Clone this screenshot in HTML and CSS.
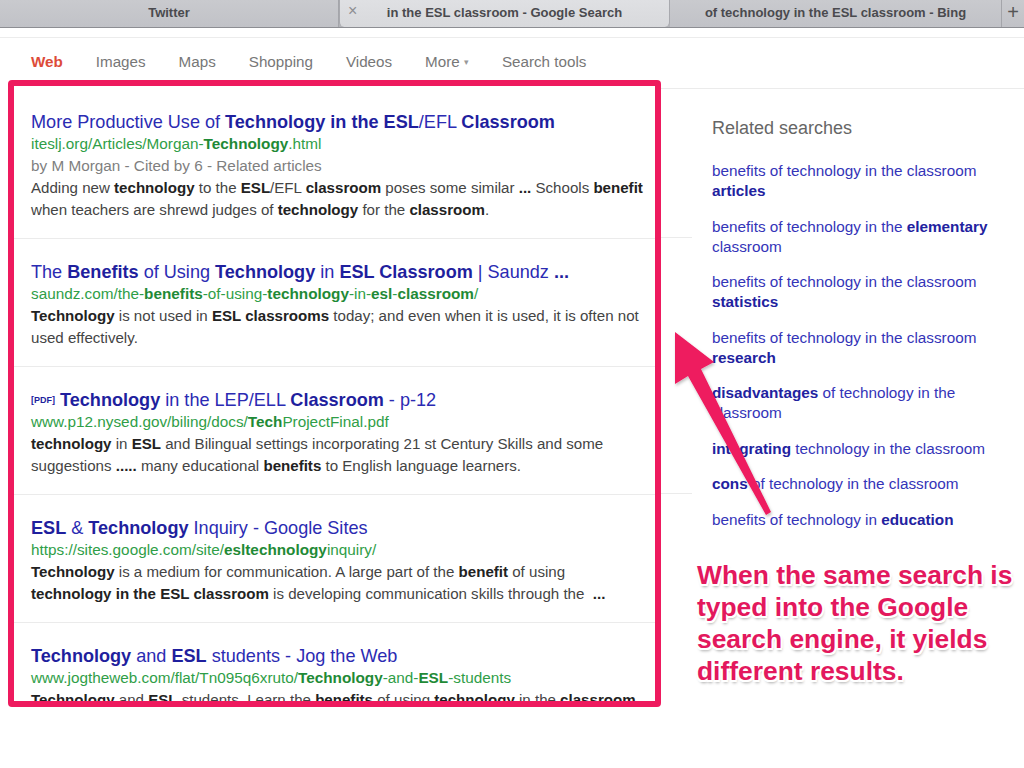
FILE: index.html
```html
<!DOCTYPE html>
<html>
<head>
<meta charset="utf-8">
<link rel="stylesheet" href="styles.css">
</head>
<body>
<div class="tabbar">
  <div class="tab tab-first">Twitter</div>
  <div class="tab tab-active"><span class="tab-close">×</span><span class="tab-title">in the ESL classroom - Google Search</span></div>
  <div class="tab tab-last">of technology in the ESL classroom - Bing</div>
  <div class="tab-plus">+</div>
</div>
<div class="toolstrip"></div>
<nav class="gnav">
  <span class="gnav-item gnav-active">Web</span>
  <span class="gnav-item">Images</span>
  <span class="gnav-item">Maps</span>
  <span class="gnav-item">Shopping</span>
  <span class="gnav-item">Videos</span>
  <span class="gnav-item">More <span class="caret">▾</span></span>
  <span class="gnav-item">Search tools</span>
</nav>
<main class="main">
  <section class="results">
    <div class="result">
      <div class="r-title">More Productive Use of <b>Technology in the ESL</b>/EFL <b>Classroom</b></div>
      <div class="r-url">iteslj.org/Articles/Morgan-<b>Technology</b>.html</div>
      <div class="r-meta">by M Morgan - Cited by 6 - Related articles</div>
      <p class="r-snip">Adding new <b>technology</b> to the <b>ESL</b>/EFL <b>classroom</b> poses some similar <b>...</b> Schools <b>benefit</b> when teachers are shrewd judges of <b>technology</b> for the <b>classroom</b>.</p>
    </div>
    <div class="result">
      <div class="r-title">The <b>Benefits</b> of Using <b>Technology</b> in <b>ESL Classroom</b> | Saundz <b>...</b></div>
      <div class="r-url">saundz.com/the-<b>benefits</b>-of-using-<b>technology</b>-in-<b>esl</b>-<b>classroom</b>/</div>
      <p class="r-snip"><b>Technology</b> is not used in <b>ESL classrooms</b> today; and even when it is used, it is often not used effectively.</p>
    </div>
    <div class="result">
      <div class="r-title"><span class="pdf">[PDF]</span> <b>Technology</b> in the LEP/ELL <b>Classroom</b> - p-12</div>
      <div class="r-url">www.p12.nysed.gov/biling/docs/<b>Tech</b>ProjectFinal.pdf</div>
      <p class="r-snip"><b>technology</b> in <b>ESL</b> and Bilingual settings incorporating 21 st Century Skills and some suggestions <b>.....</b> many educational <b>benefits</b> to English language learners.</p>
    </div>
    <div class="result">
      <div class="r-title"><b>ESL</b> &amp; <b>Technology</b> Inquiry - Google Sites</div>
      <div class="r-url">https://sites.google.com/site/<b>esltechnology</b>inquiry/</div>
      <p class="r-snip"><b>Technology</b> is a medium for communication. A large part of the <b>benefit</b> of using <b>technology in the ESL classroom</b> is developing communication skills through the &nbsp;<b>...</b></p>
    </div>
    <div class="result">
      <div class="r-title"><b>Technology</b> and <b>ESL</b> students - Jog the Web</div>
      <div class="r-url">www.jogtheweb.com/flat/Tn095q6xruto/<b>Technology</b>-and-<b>ESL</b>-students</div>
      <p class="r-snip"><b>Technology</b> and <b>ESL</b> students. Learn the <b>benefits</b> of using <b>technology</b> in the <b>classroom</b></p>
    </div>
  </section>
  <aside class="side">
    <h2 class="side-head">Related searches</h2>
    <ul class="related">
      <li>benefits of technology in the classroom <b>articles</b></li>
      <li>benefits of technology in the <b>elementary</b> classroom</li>
      <li>benefits of technology in the classroom <b>statistics</b></li>
      <li>benefits of technology in the classroom <b>research</b></li>
      <li><b>disadvantages</b> of technology in the classroom</li>
      <li><b>integrating</b> technology in the classroom</li>
      <li><b>cons</b> of technology in the classroom</li>
      <li>benefits of technology in <b>education</b></li>
    </ul>
  </aside>
</main>
<svg class="arrow" width="1024" height="768" viewBox="0 0 1024 768">
  <defs>
    <filter id="sh" x="-20%" y="-20%" width="140%" height="140%">
      <feDropShadow dx="1" dy="2" stdDeviation="1.5" flood-color="#000" flood-opacity="0.25"/>
    </filter>
  </defs>
  <polygon filter="url(#sh)" fill="#ee1a5e" points="675,332 714,362 701,369 771,512 766,515 688,376 675,384"/>
</svg>
<div class="callout">When the same search is typed into the Google search engine, it yields different results.</div>
</body>
</html>
```
FILE: styles.css
```css
* { box-sizing: border-box; }
html, body { margin: 0; padding: 0; background: #fff; }
body {
  font-family: "Liberation Sans", Arial, sans-serif;
  width: 1024px;
  height: 768px;
  overflow: hidden;
  position: relative;
}

/* tab bar */
.tabbar {
  display: flex;
  height: 28px;
  background: #b3b4b9;
  border-bottom: 1px solid #8d8e93;
}
.tab {
  display: flex;
  align-items: center;
  justify-content: center;
  padding-bottom: 3px;
  font-size: 13px;
  font-weight: bold;
  color: #4a4a4e;
  background: linear-gradient(#c9cace, #c1c2c7);
  border-right: 1px solid #a4a5aa;
}
.tab-first { width: 339px; }
.tab-active {
  width: 331px;
  position: relative;
  background: linear-gradient(#dfe0e3, #d8d9dc);
  border-radius: 0 0 5px 5px;
  border-left: 1px solid #a8a9ae;
  border-right: 1px solid #a8a9ae;
}
.tab-close {
  position: absolute;
  left: 8px;
  top: 2px;
  font-size: 16px;
  font-weight: normal;
  color: #8e8e92;
}
.tab-last { width: 332px; }
.tab-plus {
  flex: 1;
  display: flex;
  align-items: center;
  justify-content: center;
  padding-bottom: 3px;
  font-size: 20px;
  color: #555;
  background: linear-gradient(#c9cace, #c1c2c7);
}

.toolstrip {
  height: 10px;
  border-bottom: 1px solid #ececec;
}

/* google nav */
.gnav {
  display: flex;
  gap: 33px;
  padding: 14px 0 8px 31px;
  height: 42px;
  font-size: 15.2px;
  line-height: 20px;
  color: #777;
}
.gnav-active { color: #dd4b39; font-weight: bold; }
.caret { font-size: 9px; vertical-align: 2px; color: #999; }

/* main */
.main {
  display: flex;
  align-items: flex-start;
}
.results {
  margin-left: 8px;
  width: 653px;
  height: 627px;
  border: 6px solid #ee1a5e;
  border-radius: 4px;
  overflow: hidden;
  padding: 3px 0 0 0;
  background: #fff;
}
.result {
  padding: 23px 8px 17px 17px;
  border-bottom: 1px solid #ebebeb;
}
.r-title {
  font-size: 18.1px;
  line-height: 21px;
  color: #2b2bb3;
  white-space: nowrap;
}
.r-title b { color: #1f1f9e; }
.pdf { font-size: 9px; font-weight: bold; vertical-align: 3px; color: #1f1f9e; }
.r-url {
  font-size: 15.3px;
  line-height: 22px;
  color: #2f9e47;
  white-space: nowrap;
}
.r-url b { color: #1f8a36; }
.r-meta {
  font-size: 15.3px;
  line-height: 22px;
  color: #7f7f7f;
}
.r-snip {
  margin: 0;
  font-size: 15.1px;
  line-height: 22px;
  color: #444;
}
.r-snip b { color: #222; }

/* side column */
.side {
  flex: 1;
  margin-top: 8px;
  border-top: 1px solid #ebebeb;
  padding: 28px 20px 0 51px;
  background:
    linear-gradient(#ebebeb, #ebebeb) 0 148px / 31px 1px no-repeat,
    linear-gradient(#ebebeb, #ebebeb) 0 404px / 31px 1px no-repeat;
  height: 500px;
}
.side-head {
  margin: 0;
  font-size: 18px;
  line-height: 22px;
  font-weight: normal;
  color: #666;
}
.related {
  list-style: none;
  margin: 22px 0 0 0;
  padding: 0;
  display: flex;
  flex-direction: column;
  gap: 15.5px;
  font-size: 15.3px;
  line-height: 20px;
  color: #3434b8;
}
.related b { color: #22229f; }

/* annotations */
.arrow {
  position: absolute;
  left: 0;
  top: 0;
  pointer-events: none;
}
.callout {
  position: absolute;
  left: 697px;
  top: 559px;
  width: 327px;
  font-family: "Liberation Sans", Arial, sans-serif;
  font-weight: bold;
  font-size: 26.4px;
  line-height: 32px;
  color: #e3185d;
  text-shadow:
    2px 0 0 #fff, -2px 0 0 #fff, 0 2px 0 #fff, 0 -2px 0 #fff,
    1.5px 1.5px 0 #fff, -1.5px 1.5px 0 #fff, 1.5px -1.5px 0 #fff, -1.5px -1.5px 0 #fff,
    1px 3px 3px rgba(0,0,0,0.35);
}
```
